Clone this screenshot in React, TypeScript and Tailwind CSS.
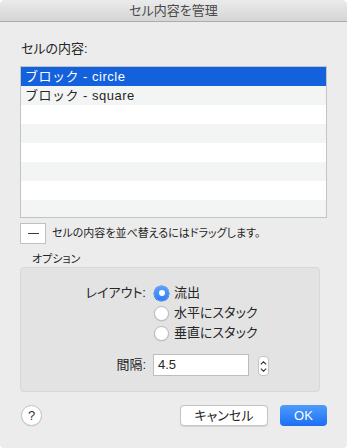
import React from "react";

const font = { fontFamily: "'Liberation Sans', 'Noto Sans CJK JP', sans-serif" };

function Radio({ checked, label }: { checked?: boolean; label: string }) {
  return (
    <div className="flex items-center h-[20px]">
      {checked ? (
        <div className="w-[15px] h-[15px] rounded-full bg-gradient-to-b from-[#5aa0fa] to-[#2f7ef5] flex items-center justify-center shadow-[0_0_0_0.5px_#2a6fd8]">
          <div className="w-[6px] h-[6px] rounded-full bg-white" />
        </div>
      ) : (
        <div className="w-[15px] h-[15px] rounded-full bg-white border border-[#b9b9b9] shadow-[0_0.5px_1px_rgba(0,0,0,0.12)]" />
      )}
      <span className="ml-[5px] text-[13px] text-[#262626]">{label}</span>
    </div>
  );
}

export default function App() {
  const rows = Array.from({ length: 8 });
  return (
    <div className="w-[347px] h-[448px] bg-white [font-feature-settings:'palt']" style={font}>
      <div className="w-full h-full bg-[#ececec] rounded-t-[5px] rounded-b-[4px] overflow-hidden flex flex-col">
        <div className="h-[22px] shrink-0 bg-gradient-to-b from-[#ebebeb] to-[#d5d5d5] border-b border-[#acacac] flex items-center justify-center">
          <span className="text-[13px] text-[#4a4a4a]">セル内容を管理</span>
        </div>
        <div className="px-[20px] flex flex-col">
          <div className="mt-[19px] h-[16px] leading-[16px] text-[13px] text-[#262626] pl-[1px]">セルの内容:</div>
          <div className="mt-[9px] w-[307px] h-[152px] border border-[#c3c3c3] bg-white flex flex-col overflow-hidden [font-feature-settings:normal]">
            {rows.map((_, i) => {
              const sel = i === 0;
              const bg = sel ? "bg-[#1461dd]" : i % 2 === 1 ? "bg-[#f3f4f4]" : "bg-white";
              const label = i === 0 ? "ブロック - circle" : i === 1 ? "ブロック - square" : "";
              return (
                <div key={i} className={`h-[19px] shrink-0 flex items-center pl-[4px] text-[13px] tracking-[0.5px] ${bg} ${sel ? "text-white" : "text-[#262626]"}`}>
                  {label}
                </div>
              );
            })}
          </div>
          <div className="mt-[5px] flex items-center">
            <div className="w-[26px] h-[21px] bg-white border border-[#c0c0c0] flex items-center justify-center">
              <div className="w-[11px] h-[1px] bg-[#3a3a3a]" />
            </div>
            <span className="ml-[6px] text-[11px] text-[#262626]">セルの内容を並べ替えるにはドラッグします。</span>
          </div>
          <div className="mt-[8px] ml-[12px] h-[14px] leading-[14px] text-[11px] text-[#262626]">オプション</div>
          <div className="mt-[1px] w-[300px] h-[125px] rounded-[4px] bg-[#e3e3e3] border border-[#d8d8d8] flex flex-col">
            <div className="mt-[15px] flex">
              <div className="w-[125px] text-right text-[13px] text-[#262626] h-[20px] leading-[20px]">レイアウト:</div>
              <div className="ml-[8px] flex flex-col">
                <Radio checked label="流出" />
                <Radio label="水平にスタック" />
                <Radio label="垂直にスタック" />
              </div>
            </div>
            <div className="mt-[11px] flex items-center">
              <div className="w-[125px] text-right text-[13px] text-[#262626]">間隔:</div>
              <div className="ml-[7px] w-[96px] h-[22px] bg-white border border-[#bdbdbd] flex items-center pl-[4px] text-[13px] text-[#262626]">
                4.5
              </div>
              <div className="ml-[9px] w-[11px] h-[20px] rounded-[4px] bg-white border border-[#c4c4c4] flex flex-col items-center justify-center gap-[3px] mt-[2px]">
                <svg width="7" height="4" viewBox="0 0 7 4"><path d="M0.8 3.4 L3.5 0.8 L6.2 3.4" fill="none" stroke="#333" strokeWidth="1.1" /></svg>
                <svg width="7" height="4" viewBox="0 0 7 4"><path d="M0.8 0.6 L3.5 3.2 L6.2 0.6" fill="none" stroke="#333" strokeWidth="1.1" /></svg>
              </div>
            </div>
          </div>
          <div className="mt-[13px] flex items-center">
            <div className="ml-[1px] w-[21px] h-[21px] rounded-full bg-white border border-[#c4c4c4] shadow-[0_0.5px_1px_rgba(0,0,0,0.1)] flex items-center justify-center text-[13px] text-[#333]">
              ?
            </div>
            <div className="ml-auto w-[88px] h-[21px] rounded-[4px] bg-white border border-[#c4c4c4] shadow-[0_0.5px_1px_rgba(0,0,0,0.1)] flex items-center justify-center text-[13px] text-[#262626]">
              キャンセル
            </div>
            <div className="ml-[12px] w-[47px] h-[21px] rounded-[4px] bg-gradient-to-b from-[#4d9bfb] to-[#1b6ff5] flex items-center justify-center text-[13px] text-white">
              OK
            </div>
          </div>
        </div>
      </div>
    </div>
  );
}
